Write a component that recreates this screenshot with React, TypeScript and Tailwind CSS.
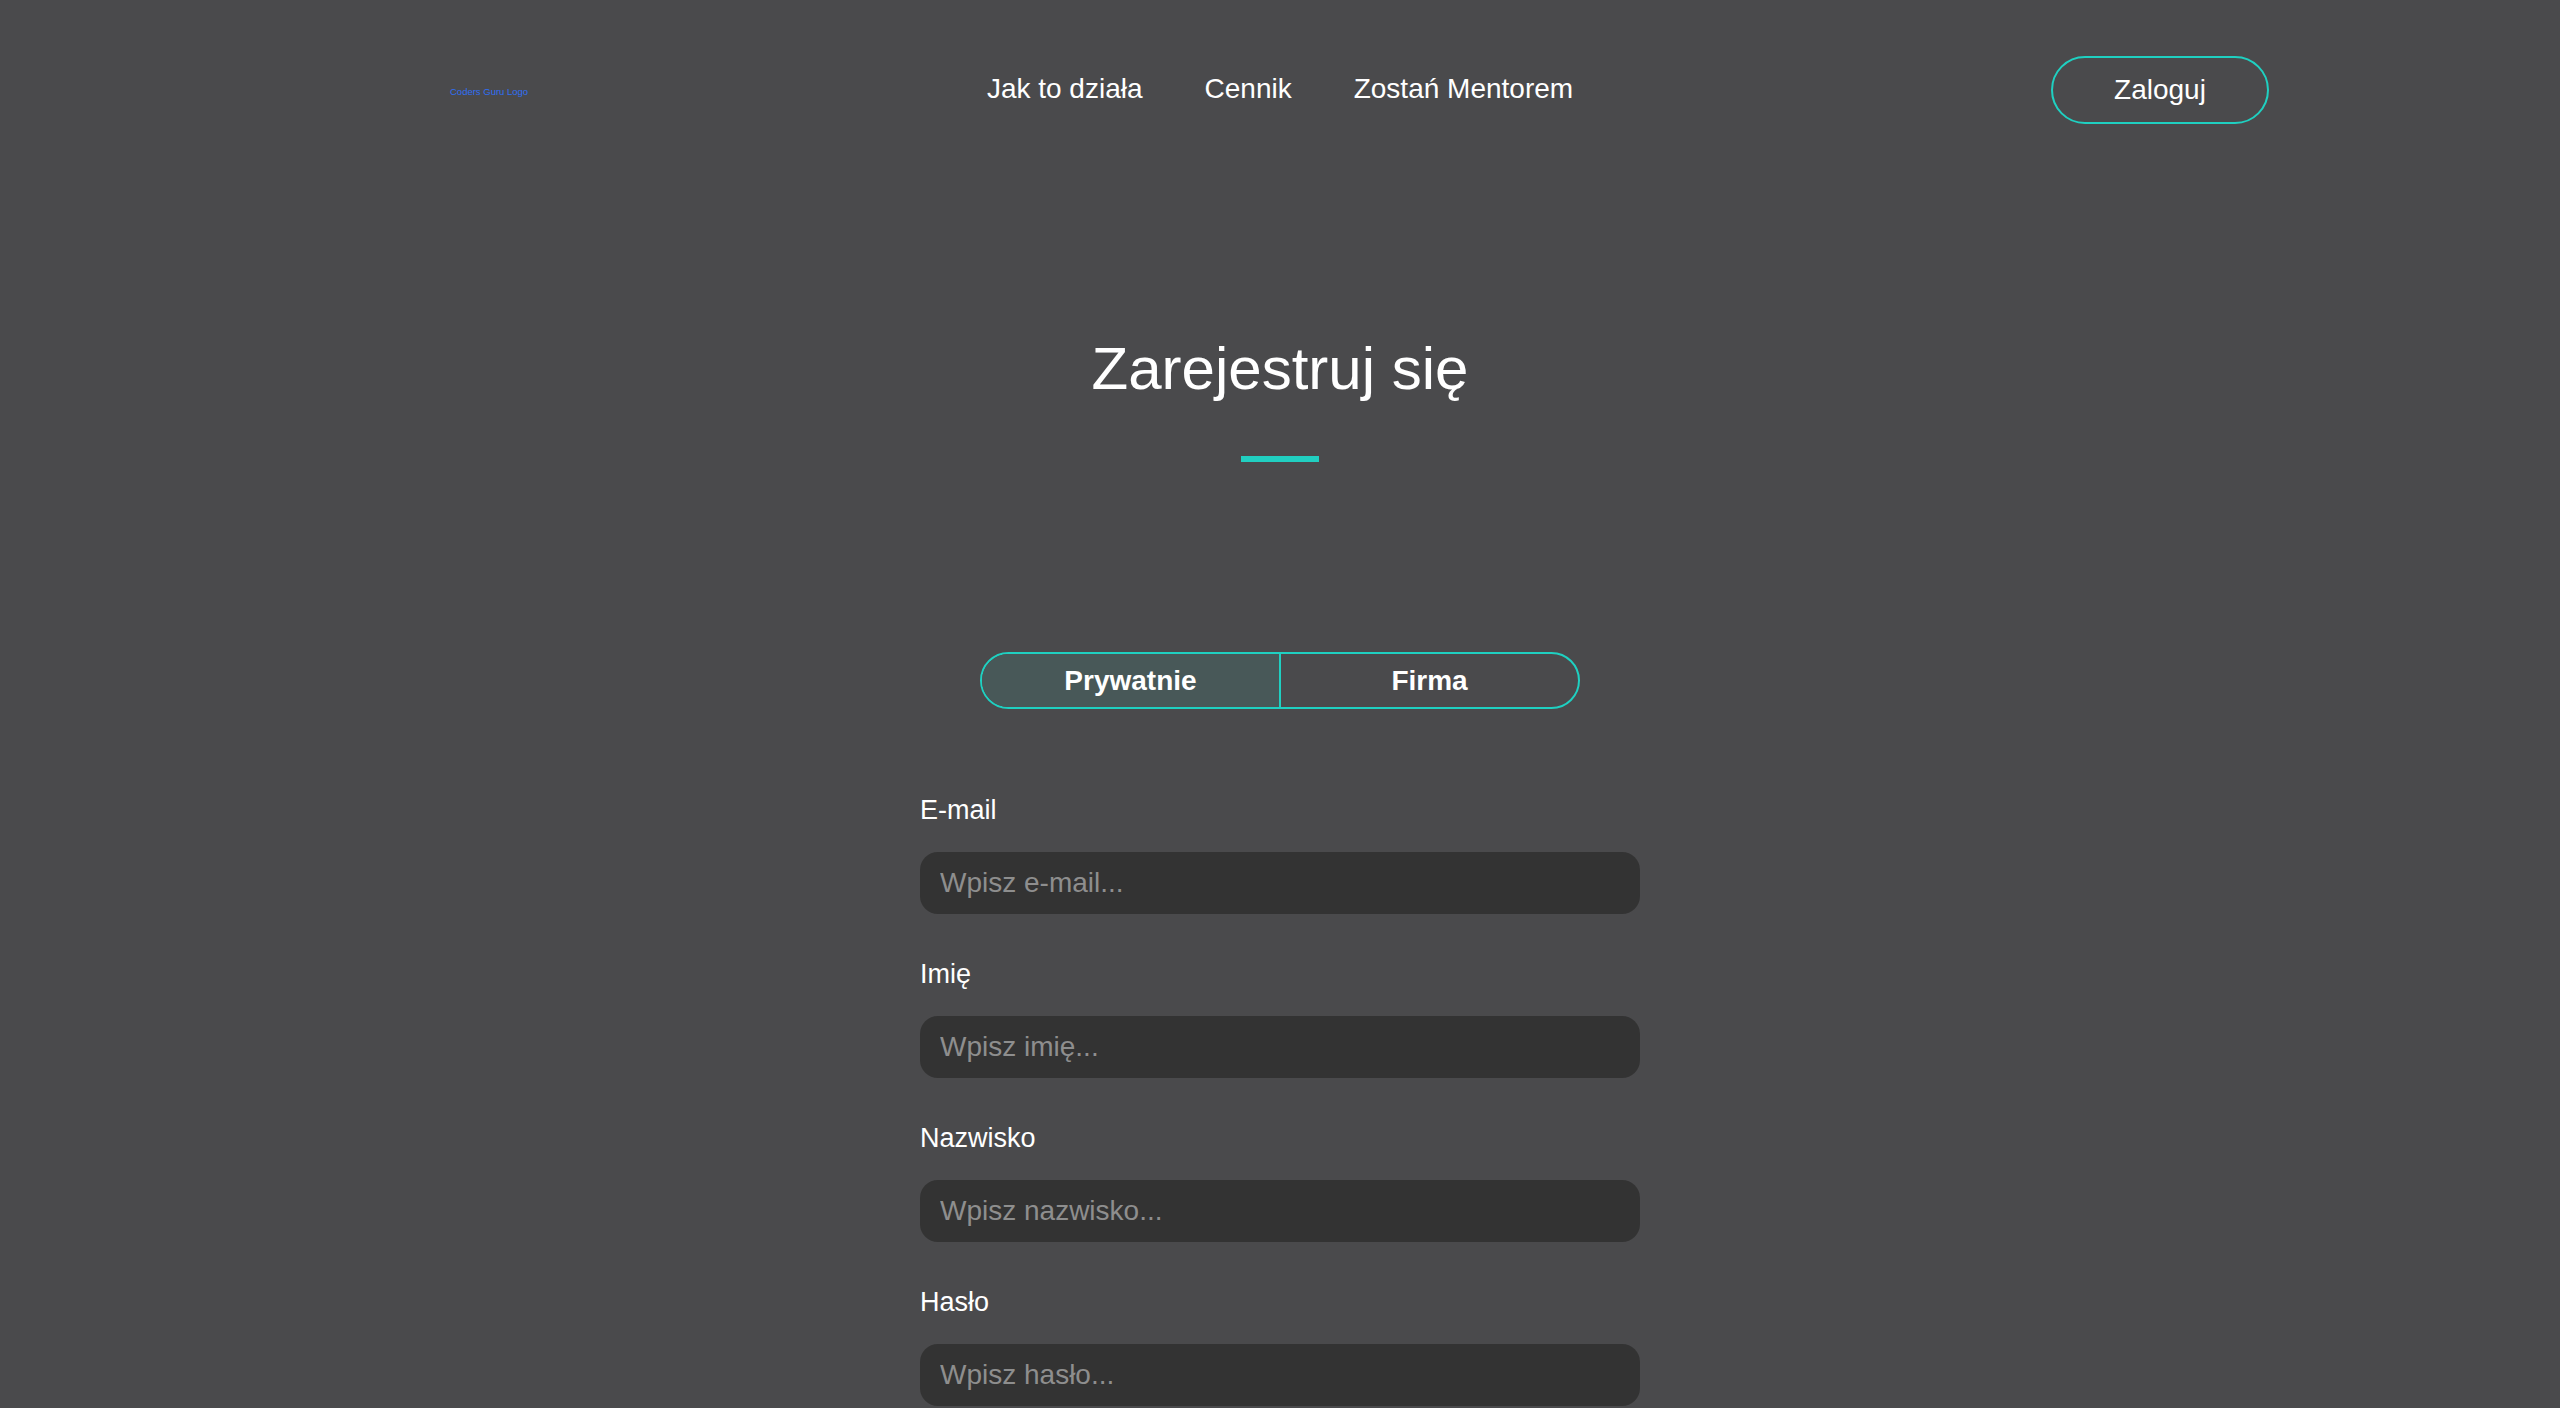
import { useState } from "react";

const NAV_LINKS = ["Jak to działa", "Cennik", "Zostań Mentorem"];

const FIELDS = [
  { id: "email", label: "E-mail", placeholder: "Wpisz e-mail...", type: "email" },
  { id: "firstName", label: "Imię", placeholder: "Wpisz imię...", type: "text" },
  { id: "lastName", label: "Nazwisko", placeholder: "Wpisz nazwisko...", type: "text" },
  { id: "password", label: "Hasło", placeholder: "Wpisz hasło...", type: "password" },
];

type AccountType = "private" | "company";

export default function App() {
  const [accountType, setAccountType] = useState<AccountType>("private");

  return (
    <div className="min-h-screen w-full bg-[#4a4a4c] font-['Liberation_Sans',Arial,sans-serif] text-white">
      <header className="grid grid-cols-[1fr_auto_1fr] items-center pt-[56px]">
        <div className="pl-[450px]">
          <span className="text-[9.5px] leading-none text-[#2f6ff5]">Coders Guru Logo</span>
        </div>
        <nav className="flex items-center gap-[62px] pb-[3px]">
          {NAV_LINKS.map((link) => (
            <a key={link} href="#" className="text-[28px] leading-[32px] text-white">
              {link}
            </a>
          ))}
        </nav>
        <div className="flex justify-end pr-[291px]">
          <button
            type="button"
            className="h-[68px] w-[218px] rounded-full border-2 border-[#1fd0c1] text-[28px] text-white"
          >
            Zaloguj
          </button>
        </div>
      </header>

      <main className="flex flex-col items-center">
        <h1 className="mt-[210px] text-[60px] font-light leading-[70px] text-white">Zarejestruj się</h1>
        <div className="mt-[52px] h-[6px] w-[78px] bg-[#21cfc1]" />

        <div className="mt-[190px] flex h-[57px] w-[600px] overflow-hidden rounded-full border-2 border-[#1fd0c1]">
          <button
            type="button"
            onClick={() => setAccountType("private")}
            className={`flex-1 border-r-2 border-[#1fd0c1] text-[28px] font-bold ${
              accountType === "private" ? "bg-[#485858]" : ""
            }`}
          >
            Prywatnie
          </button>
          <button
            type="button"
            onClick={() => setAccountType("company")}
            className={`flex-1 text-[28px] font-bold ${accountType === "company" ? "bg-[#485858]" : ""}`}
          >
            Firma
          </button>
        </div>

        <form className="mt-[85px] flex w-[720px] flex-col gap-[44px]">
          {FIELDS.map((field) => (
            <div key={field.id} className="flex flex-col">
              <label htmlFor={field.id} className="text-[27px] leading-[32px] text-white">
                {field.label}
              </label>
              <input
                id={field.id}
                type={field.type}
                placeholder={field.placeholder}
                className="mt-[26px] h-[62px] w-full rounded-[18px] bg-[#333333] px-[20px] text-[28px] text-white outline-none placeholder:text-[#8e8e8e]"
              />
            </div>
          ))}
        </form>
      </main>
    </div>
  );
}
